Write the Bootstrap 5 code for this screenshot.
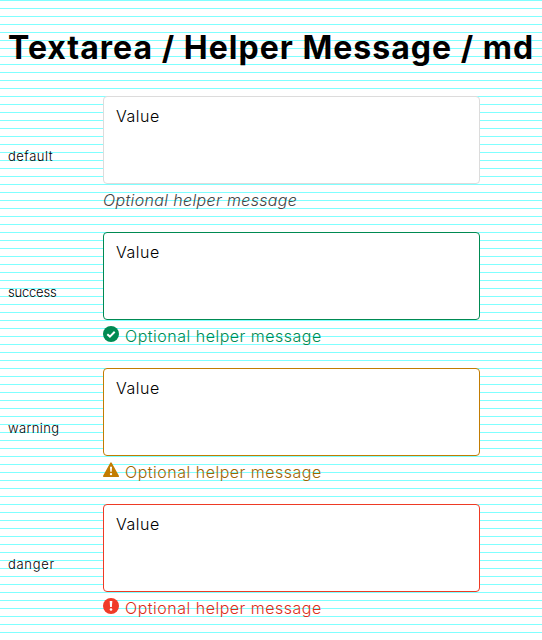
<!DOCTYPE html>
<html lang="en">
<head>
<meta charset="utf-8">
<meta name="viewport" content="width=device-width, initial-scale=1">
<title>Textarea / Helper Message / md</title>
<link href="https://cdn.jsdelivr.net/npm/bootstrap@5.3.0/dist/css/bootstrap.min.css" rel="stylesheet">
<style>
html{overflow:hidden}
body{height:640px;overflow:hidden;color:#000;font-family:Inter,"Open Sans",sans-serif;font-size:16px;font-weight:300;line-height:24px;
 background:#fff repeating-linear-gradient(to bottom,#80ffff 0,#80ffff 1px,#fff 1px,#fff 8px)}
.page-title{font-size:32px;line-height:48px;font-weight:700;letter-spacing:1.02px;padding-top:24px;margin-bottom:24px}
.example{height:136px}
.example-label{width:95px;padding-top:48px;font-size:13px;letter-spacing:.5px}
.success .example-label{letter-spacing:-.2px}
.warning .example-label{letter-spacing:.4px}
.danger .example-label{letter-spacing:.7px}
.field{width:377px}
.field .form-control{height:88px;padding:7px 12px;font-size:16px;font-weight:300;line-height:24px;color:#000;border:1px solid #dcdcdc;border-radius:4px;resize:none;background:#fff;letter-spacing:.5px}
.help{height:24px;padding-top:4px;letter-spacing:.5px;color:#444}
.help.fst-italic{letter-spacing:.35px}
.help svg{width:16px;height:16px;margin:2px 6px 0 0}
.success .form-control{border-color:#008a52}.success .help{color:#008a52}
.warning .form-control{border-color:#c27c02}.warning .help{color:#a06400}.warning svg{color:#c27c02}
.danger .form-control{border-color:#ee3a24}.danger .help{color:#dc2c18}.danger svg{color:#f03c28}
</style>
</head>
<body>
<main class="ps-2">
<h1 class="page-title text-nowrap">Textarea / Helper Message / md</h1>
<section class="example d-flex">
 <label class="example-label" for="t1">default</label>
 <div class="field"><textarea id="t1" class="form-control">Value</textarea>
 <div class="help fst-italic text-nowrap">Optional helper message</div></div>
</section>
<section class="example success d-flex">
 <label class="example-label" for="t2">success</label>
 <div class="field"><textarea id="t2" class="form-control">Value</textarea>
 <div class="help d-flex text-nowrap"><svg viewBox="0 0 16 16"><circle cx="8" cy="8" r="8" fill="currentColor"/><path d="M4.3 8.2 6.9 10.6 11.7 5.8" fill="none" stroke="#fff" stroke-width="2"/></svg><span>Optional helper message</span></div></div>
</section>
<section class="example warning d-flex">
 <label class="example-label" for="t3">warning</label>
 <div class="field"><textarea id="t3" class="form-control">Value</textarea>
 <div class="help d-flex text-nowrap"><svg viewBox="0 0 16 16"><path d="M8 1.2 15.2 14.2H.8Z" fill="currentColor" stroke="currentColor" stroke-width="1.6" stroke-linejoin="round"/><path d="M7 4.8h2l-.3 5H7.3Z" fill="#fff"/><circle cx="8" cy="12.1" r="1.2" fill="#fff"/></svg><span>Optional helper message</span></div></div>
</section>
<section class="example danger d-flex">
 <label class="example-label" for="t4">danger</label>
 <div class="field"><textarea id="t4" class="form-control">Value</textarea>
 <div class="help d-flex text-nowrap"><svg viewBox="0 0 16 16"><circle cx="8" cy="8" r="8" fill="currentColor"/><path d="M6.7 3h2.6l-.4 6H7.1Z" fill="#fff"/><circle cx="8" cy="11.5" r="1.3" fill="#fff"/></svg><span>Optional helper message</span></div></div>
</section>
</main>
<script src="https://cdn.jsdelivr.net/npm/bootstrap@5.3.0/dist/js/bootstrap.bundle.min.js"></script>
</body>
</html>
